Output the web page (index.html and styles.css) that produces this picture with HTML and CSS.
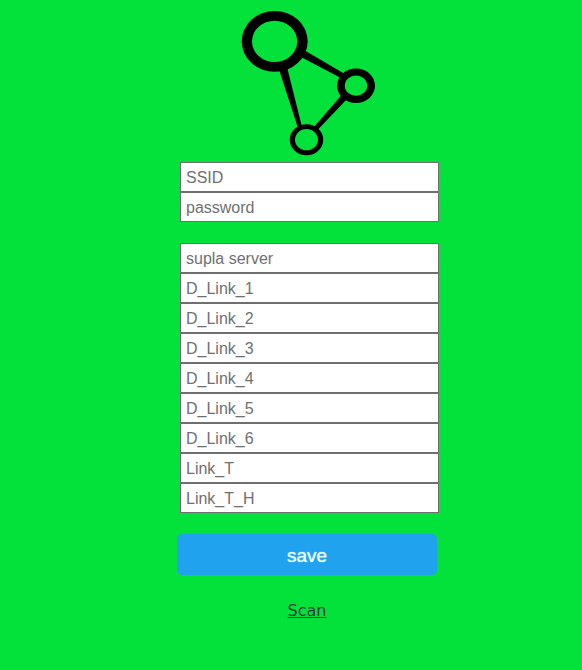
FILE: index.html
```html
<!DOCTYPE html>
<html lang="en">
<head>
<meta charset="utf-8">
<meta name="viewport" content="width=device-width, initial-scale=1">
<title>Settings</title>
<link rel="stylesheet" href="styles.css">
</head>
<body>
<main class="page">
  <svg class="logo" viewBox="239 10 136 146" aria-hidden="true">
    <path fill-rule="evenodd" d="M241.700 41.300a33 30.400 0 1 0 66 0a33 30.400 0 1 0-66 0zM252 41.400a22.600 20.700 0 1 0 45.200 0a22.600 20.700 0 1 0-45.200 0z"/>
    <path fill-rule="evenodd" d="M337 85.700a19 17.300 0 1 0 38 0a19 17.300 0 1 0-38 0zM344.800 85.700a11.200 10.100 0 1 0 22.400 0a11.200 10.100 0 1 0-22.400 0z"/>
    <path fill-rule="evenodd" d="M289.800 139.700a16.700 15.500 0 1 0 33.400 0a16.700 15.500 0 1 0-33.400 0zM295 139.700a11.500 10.600 0 1 0 23 0a11.500 10.600 0 1 0-23 0z"/>
    <path d="M304 50L344 73.500L340 77.500L300 56.500zM278.500 68L287 67L302 127L298 128zM342 94.500L347.500 98.500L318 129.500L314 127z"/>
  </svg>
  <form class="form">
    <div class="group">
      <input class="field" type="text" placeholder="SSID" aria-label="SSID">
      <input class="field" type="password" placeholder="password" aria-label="password">
    </div>
    <div class="group">
      <input class="field" type="text" placeholder="supla server" aria-label="supla server">
      <input class="field" type="text" placeholder="D_Link_1" aria-label="D_Link_1">
      <input class="field" type="text" placeholder="D_Link_2" aria-label="D_Link_2">
      <input class="field" type="text" placeholder="D_Link_3" aria-label="D_Link_3">
      <input class="field" type="text" placeholder="D_Link_4" aria-label="D_Link_4">
      <input class="field" type="text" placeholder="D_Link_5" aria-label="D_Link_5">
      <input class="field" type="text" placeholder="D_Link_6" aria-label="D_Link_6">
      <input class="field" type="text" placeholder="Link_T" aria-label="Link_T">
      <input class="field" type="text" placeholder="Link_T_H" aria-label="Link_T_H">
    </div>
    <button class="save" type="button">save</button>
  </form>
  <a class="scan" href="#scan">Scan</a>
</main>
</body>
</html>
```
FILE: styles.css
```css
* {
  box-sizing: border-box;
}

body {
  margin: 0;
  background: #02e23a;
  font-family: "Liberation Sans", Arial, sans-serif;
  font-size: 16px;
}

.page {
  display: flex;
  flex-direction: column;
  align-items: center;
  padding: 10px 0 24px 32px;
}

.logo {
  width: 136px;
  height: 146px;
  margin-bottom: 6px;
}

.form {
  display: flex;
  flex-direction: column;
  gap: 21px;
  width: 260px;
}

.group {
  display: flex;
  flex-direction: column;
  margin: 0 -2px 0 3px;
}

.field {
  width: 100%;
  height: 30px;
  margin: 0;
  padding: 2px 5px 0;
  border: 1px solid #6f6f6f;
  border-radius: 0;
  background: #fff;
  color: #222;
  font: inherit;
}

.field::placeholder {
  color: #707070;
  opacity: 1;
}

.save {
  height: 41px;
  padding: 3px 0 0;
  border: 0;
  border-radius: 5px;
  background: #20a2ee;
  color: #e6ffff;
  font: 19px "Liberation Sans", Arial, sans-serif;
  text-shadow: 0 0 1px #e6ffff;
}

.scan {
  margin-top: 26px;
  color: #303c42;
  font: 16px/20px "DejaVu Sans", Verdana, sans-serif;
}
```
